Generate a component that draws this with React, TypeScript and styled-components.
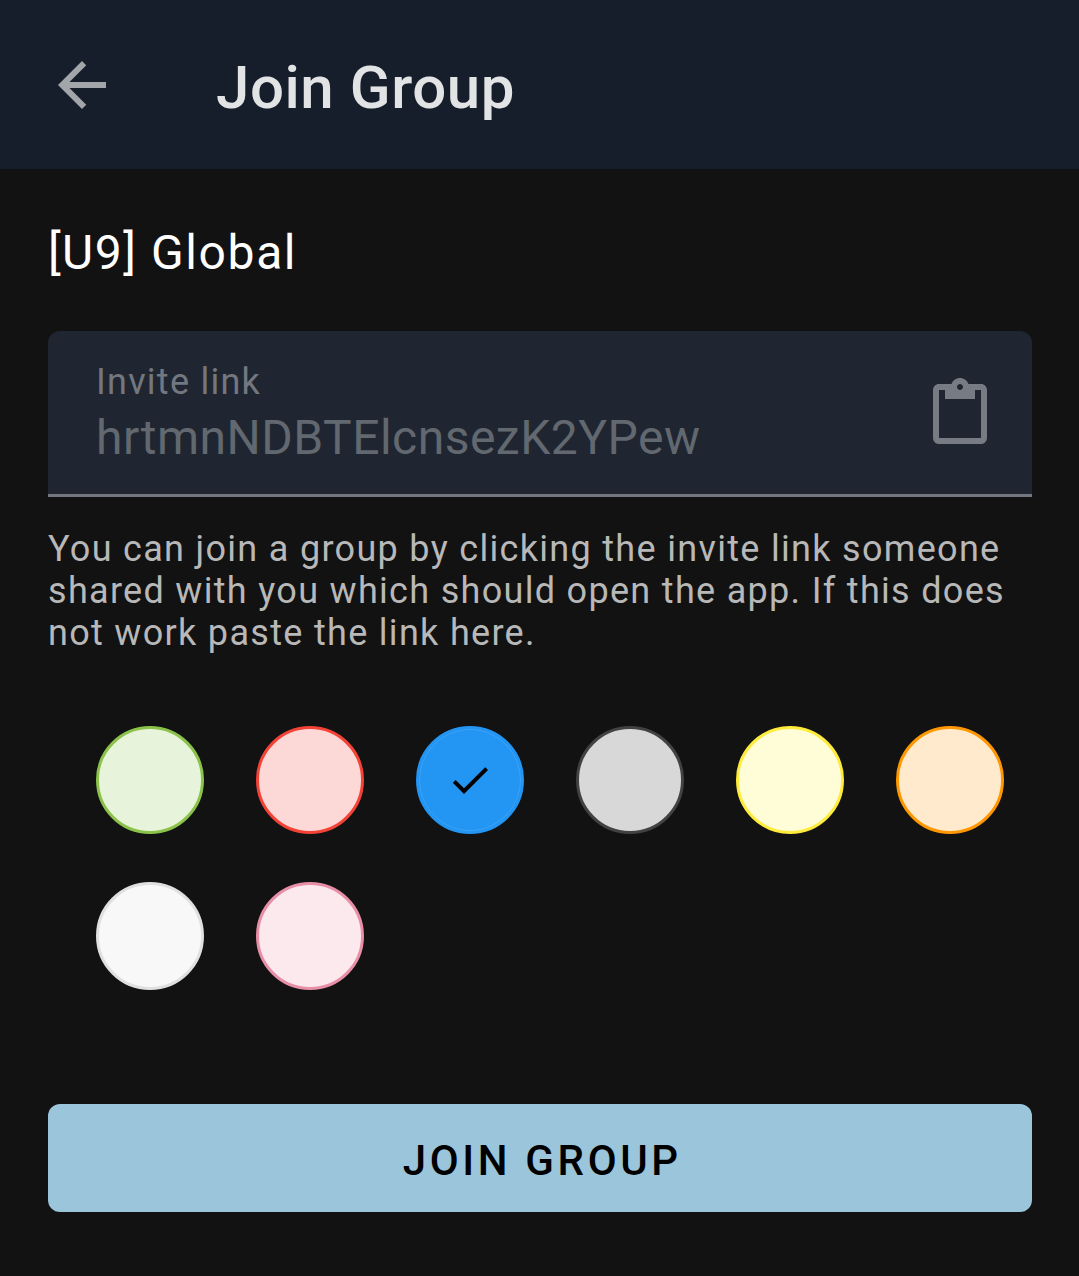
import React from 'react';
import styled, { createGlobalStyle } from 'styled-components';

const Global = createGlobalStyle`
  * { box-sizing: border-box; }
  body { margin: 0; background: #121212; font-family: Roboto, sans-serif; }
`;
const Screen = styled.div`
  width: 1079px; height: 1276px; background: #121212; overflow: hidden;
`;
const AppBar = styled.header`
  height: 169px; background: #171e2b; display: flex; align-items: center; padding: 7px 0 0 46px;
`;
const BackButton = styled.button`
  width: 72px; height: 72px; padding: 0; margin: -7px 98px 0 0; border: 0; background: none; color: #a2a5aa;
  svg { display: block; }
`;
const Title = styled.h1`
  margin: 0; font-size: 60px; line-height: 72px; font-weight: 500; letter-spacing: 0.55px; color: #e2e3e4; white-space: nowrap;
`;
const Content = styled.main`
  padding: 52px 47.5px 0 48px; display: flex; flex-direction: column;
`;
const GroupName = styled.h2`
  margin: 0; font-size: 48px; line-height: 64px; font-weight: 400; letter-spacing: 1.6px; color: #fff; white-space: nowrap;
`;
const Field = styled.div`
  margin-top: 46px; height: 166px; border-radius: 12px 12px 0 0; background: #202631; border-bottom: 3px solid #737780;
  display: flex; justify-content: space-between; padding: 0 36px 0 48px;
`;
const FieldText = styled.div`
  padding-top: 30px; white-space: nowrap;
`;
const Label = styled.div`
  font-size: 36px; line-height: 42px; letter-spacing: 1.25px; color: #737780;
`;
const Value = styled.div`
  margin-top: 6px; font-size: 48px; line-height: 58px; letter-spacing: 0.48px; color: #62686f;
`;
const PasteButton = styled.button`
  margin-top: 46.5px; width: 72px; height: 72px; padding: 0; border: 0; background: none; color: #777b83;
  svg { display: block; }
`;
const Helper = styled.p`
  margin: 31px 0 0; font-size: 36px; line-height: 42px; letter-spacing: 1.31px; color: #b8b8b8; white-space: nowrap;
`;
const Palette = styled.div`
  margin: 72.4px 0 0 48px; display: grid; grid-template-columns: repeat(6, 108px); gap: 48px 52px;
`;
const Swatch = styled.button<{ $fill: string; $edge: string; $ring?: string }>`
  width: 108px; height: 108px; padding: 0; border-radius: 50%; border: 3px solid ${p => p.$edge}; background: ${p => p.$fill};
  box-shadow: ${p => (p.$ring ? `inset 0 0 0 1px ${p.$ring}` : 'none')};
  display: flex; align-items: center; justify-content: center; color: #000;
`;
const Join = styled.button`
  margin-top: 114px; height: 108px; padding: 5px 0 0 5px; border: 0; border-radius: 12px; background: #9ac5db; color: #000;
  font: 500 42px/50px Roboto, sans-serif; letter-spacing: 3.65px;
`;

const swatches = [
  ['#e8f3db', '#8bc34a'], ['#fcd9d7', '#f44336'], ['#2395f3', '#2395f3', '#3ea2f5'], ['#d8d8d8', '#424242'],
  ['#fffcd8', '#ffeb3b'], ['#ffeacd', '#ff9800'], ['#f8f8f8', '#e0e0e0'], ['#fbe9ed', '#e88fa7'],
];

export default function App() {
  return (
    <Screen>
      <Global />
      <AppBar>
        <BackButton aria-label="Back">
          <svg width="72" height="72" viewBox="0 0 24 24" fill="currentColor"><path d="M20 11H7.83l5.59-5.59L12 4l-8 8 8 8 1.41-1.41L7.83 13H20v-2z" /></svg>
        </BackButton>
        <Title>Join Group</Title>
      </AppBar>
      <Content>
        <GroupName>[U9] Global</GroupName>
        <Field>
          <FieldText>
            <Label>Invite link</Label>
            <Value>hrtmnNDBTElcnsezK2YPew</Value>
          </FieldText>
          <PasteButton aria-label="Paste">
            <svg width="72" height="72" viewBox="0 0 24 24" fill="currentColor"><path d="M19 2h-4.18C14.4.84 13.3 0 12 0c-1.3 0-2.4.84-2.82 2H5c-1.1 0-2 .9-2 2v16c0 1.1.9 2 2 2h14c1.1 0 2-.9 2-2V4c0-1.1-.9-2-2-2zm-7 0c.55 0 1 .45 1 1s-.45 1-1 1-1-.45-1-1 .45-1 1-1zm7 18H5V4h2v3h10V4h2v16z" /></svg>
          </PasteButton>
        </Field>
        <Helper>
          You can join a group by clicking the invite link someone<br />
          shared with you which should open the app. If this does<br />
          not work paste the link here.
        </Helper>
        <Palette>
          {swatches.map(([fill, edge, ring], i) => (
            <Swatch key={edge} $fill={fill} $edge={edge} $ring={ring} aria-pressed={i === 2}>
              {i === 2 && <svg width="48" height="48" viewBox="0 0 24 24" fill="currentColor"><path d="M9 16.17 4.83 12l-1.42 1.41L9 19 21 7l-1.41-1.41z" /></svg>}
            </Swatch>
          ))}
        </Palette>
        <Join>JOIN GROUP</Join>
      </Content>
    </Screen>
  );
}
